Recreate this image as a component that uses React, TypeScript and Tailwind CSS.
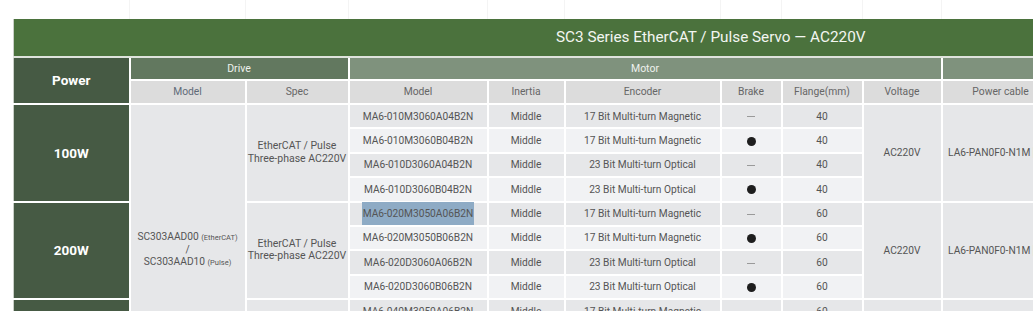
import React from 'react';

type MotorRow = {
  model: string;
  encoder: string;
  brake: boolean;
  flange: string;
};

type Group = {
  power: string;
  rows: MotorRow[];
};

const groups: Group[] = [
  {
    power: '100W',
    rows: [
      { model: 'MA6-010M3060A04B2N', encoder: '17 Bit Multi-turn Magnetic', brake: false, flange: '40' },
      { model: 'MA6-010M3060B04B2N', encoder: '17 Bit Multi-turn Magnetic', brake: true, flange: '40' },
      { model: 'MA6-010D3060A04B2N', encoder: '23 Bit Multi-turn Optical', brake: false, flange: '40' },
      { model: 'MA6-010D3060B04B2N', encoder: '23 Bit Multi-turn Optical', brake: true, flange: '40' },
    ],
  },
  {
    power: '200W',
    rows: [
      { model: 'MA6-020M3050A06B2N', encoder: '17 Bit Multi-turn Magnetic', brake: false, flange: '60' },
      { model: 'MA6-020M3050B06B2N', encoder: '17 Bit Multi-turn Magnetic', brake: true, flange: '60' },
      { model: 'MA6-020D3060A06B2N', encoder: '23 Bit Multi-turn Optical', brake: false, flange: '60' },
      { model: 'MA6-020D3060B06B2N', encoder: '23 Bit Multi-turn Optical', brake: true, flange: '60' },
    ],
  },
  {
    power: '400W',
    rows: [
      { model: 'MA6-040M3050A06B2N', encoder: '17 Bit Multi-turn Magnetic', brake: false, flange: '60' },
      { model: 'MA6-040M3050B06B2N', encoder: '17 Bit Multi-turn Magnetic', brake: true, flange: '60' },
      { model: 'MA6-040D3060A06B2N', encoder: '23 Bit Multi-turn Optical', brake: false, flange: '60' },
      { model: 'MA6-040D3060B06B2N', encoder: '23 Bit Multi-turn Optical', brake: true, flange: '60' },
    ],
  },
];

const cell = 'border-2 border-white text-center align-middle p-0';
const widths = ['w-[116px]', 'w-[116px]', 'w-[103px]', 'w-[139px]', 'w-[77px]', 'w-[156px]', 'w-[61px]', 'w-[81px]', 'w-[79px]', 'w-[118px]', 'w-[174px]', 'w-[174px]'];

const Brake = ({ on }: { on: boolean }) =>
  on ? (
    <span className="inline-block w-[9px] h-[9px] rounded-full bg-[#1e1e1e] align-middle" />
  ) : (
    <span className="inline-block w-[8px] h-px bg-[#9a9a9a] align-middle" />
  );

export default function App() {
  return (
    <div className="w-[1033px] h-[311px] overflow-hidden bg-white pl-[13px] font-['Roboto',sans-serif]">
      <table className="table-fixed border-collapse w-[1394px]">
        <colgroup>
          {widths.map((w, i) => (
            <col key={i} className={w} />
          ))}
        </colgroup>
        <thead>
          {/* faint grid of the table above */}
          <tr className="h-[19px]">
            {widths.map((_, i) => (
              <td key={i} className="p-0 border-r border-r-[#f4f4f4]" />
            ))}
          </tr>
          <tr className="h-[38px]">
            <th
              colSpan={12}
              className="bg-[#4b723d] text-[#f3f6f1] text-[15.3px] font-normal text-center border-b-2 border-b-[#dfe3dd] border-l border-l-[#c9cfc7]"
            >
              SC3 Series EtherCAT / Pulse Servo — AC220V
            </th>
          </tr>
          <tr className="h-[23px]">
            <th rowSpan={2} className={`${cell} border-l border-l-[#c9cfc7] bg-[#465a44] text-white text-[13.5px] font-bold`}>
              Power
            </th>
            <th colSpan={2} className={`${cell} bg-[#62785f] text-[#eef1ed] text-[10.5px] font-normal`}>
              Drive
            </th>
            <th colSpan={6} className={`${cell} bg-[#7f927d] text-[#eef1ed] text-[10.5px] font-normal`}>
              Motor
            </th>
            <th colSpan={3} className={`${cell} bg-[#7f927d] text-[#eef1ed] text-[10.5px] font-normal`}>
              Cable
            </th>
          </tr>
          <tr className="h-[24px] bg-[#dcdcdc] text-[10.3px] text-[#666] font-normal">
            <th className={`${cell} font-normal text-[#5f6b78]`}>Model</th>
            <th className={`${cell} font-normal`}>Spec</th>
            <th className={`${cell} font-normal`}>Model</th>
            <th className={`${cell} font-normal`}>Inertia</th>
            <th className={`${cell} font-normal`}>Encoder</th>
            <th className={`${cell} font-normal`}>Brake</th>
            <th className={`${cell} font-normal`}>Flange(mm)</th>
            <th className={`${cell} font-normal`}>Voltage</th>
            <th className={`${cell} font-normal`}>Power cable</th>
            <th className={`${cell} font-normal`}>Encoder cable</th>
            <th className={`${cell} font-normal`}>Brake cable</th>
          </tr>
        </thead>
        <tbody className="text-[10.2px] text-[#555]">
          {groups.map((group, gi) =>
            group.rows.map((row, ri) => {
              const even = ri % 2 === 1;
              const rowBg = even ? 'bg-[#f1f2f4]' : 'bg-[#e6e7e9]';
              const highlighted = gi === 1 && ri === 0;
              return (
                <tr key={row.model} className="h-[24.375px]">
                  {ri === 0 && (
                    <td rowSpan={4} className={`${cell} border-l border-l-[#c9cfc7] bg-[#465a44] text-white text-[13.5px] font-bold`}>
                      {group.power}
                    </td>
                  )}
                  {gi === 0 && ri === 0 && (
                    <td rowSpan={12} className={`${cell} bg-[#e6e7e9] leading-[12px]`}>
                      <div>
                        SC303AAD00 <span className="text-[7.5px]">(EtherCAT)</span>
                      </div>
                      <div>/</div>
                      <div>
                        SC303AAD10 <span className="text-[7.5px]">(Pulse)</span>
                      </div>
                    </td>
                  )}
                  {ri === 0 && (
                    <td rowSpan={4} className={`${cell} bg-[#e6e7e9] leading-[12.5px] text-[10.5px] whitespace-nowrap`}>
                      EtherCAT / Pulse
                      <br />
                      Three-phase AC220V
                    </td>
                  )}
                  <td className={`${cell} ${rowBg}`}>
                    {highlighted ? (
                      <span className="bg-[#8eabc5] py-[6px] px-[1px]">{row.model}</span>
                    ) : (
                      row.model
                    )}
                  </td>
                  <td className={`${cell} ${rowBg}`}>Middle</td>
                  <td className={`${cell} ${rowBg}`}>{row.encoder}</td>
                  <td className={`${cell} ${rowBg}`}>
                    <Brake on={row.brake} />
                  </td>
                  <td className={`${cell} ${rowBg}`}>{row.flange}</td>
                  {ri === 0 && (
                    <>
                      <td rowSpan={4} className={`${cell} bg-[#e6e7e9]`}>
                        AC220V
                      </td>
                      <td rowSpan={4} className={`${cell} bg-[#e6e7e9] whitespace-nowrap`}>
                        LA6-PAN0F0-N1M [3m]
                      </td>
                      <td rowSpan={4} className={`${cell} bg-[#e6e7e9] whitespace-nowrap`}>
                        LA6-ENC0F0-N1M [3m]
                      </td>
                      <td rowSpan={4} className={`${cell} bg-[#e6e7e9] whitespace-nowrap`}>
                        LA6-BRK0F0-N1M [3m]
                      </td>
                    </>
                  )}
                </tr>
              );
            })
          )}
        </tbody>
      </table>
    </div>
  );
}
